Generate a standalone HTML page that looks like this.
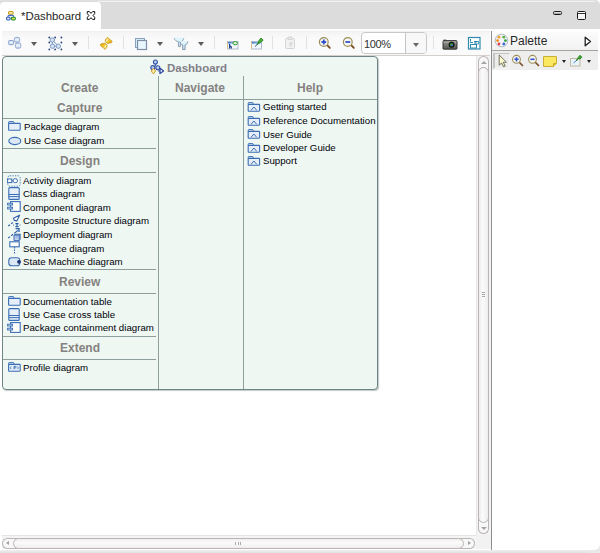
<!DOCTYPE html>
<html><head><meta charset="utf-8">
<style>
*{margin:0;padding:0;box-sizing:border-box}
html,body{width:600px;height:553px;overflow:hidden;background:#fff;font-family:"Liberation Sans",sans-serif}
.abs,svg{position:absolute}
#tabbar{left:0;top:0;width:600px;height:29px;background:#dcdcdc;border-top:1px solid #e0e0e0;border-radius:0 5px 0 0}
#tabline{left:98px;top:1px;width:497px;height:1px;background:#f2f2f2}
#tab{left:0;top:2px;width:101px;height:27px;background:#fff;border-radius:4px 4px 0 0}
#toolbar{left:2px;top:31px;width:488px;height:24px;background:linear-gradient(#f4f4f4,#fafafa 30%,#fafafa);border-top:1px solid #f0f0f0}
#tbline{left:2px;top:55px;width:488px;height:1px;background:#d6d0cc}
#dash{left:2px;top:56px;width:376px;height:334px;background:#eef7f2;border:1px solid #6f8585;border-radius:4px;box-shadow:1px 1px 1px #c4c8c8}
.hdr{position:absolute;font-weight:bold;color:#85817f;font-size:12px;white-space:nowrap;line-height:14px}
.it{position:absolute;font-size:9.7px;color:#000008;white-space:nowrap;line-height:11px}
.ln{position:absolute;height:1px;background:#8d9e9c}
.vl{position:absolute;width:1px;background:#8d9e9c}
.sep{position:absolute;top:36px;width:1px;height:13px;background:#e2e2e2}
.dd{position:absolute;top:42px;width:0;height:0;border-left:3px solid transparent;border-right:3px solid transparent;border-top:4px solid #5c5c5c}
#palette{left:491px;top:31px;width:109px;height:519px;background:#fff;border-left:1px solid #8e8e8e;border-radius:0 0 6px 0}
</style></head><body>
<div id="tabbar" class="abs"></div>
<div id="tabline" class="abs"></div>
<div id="tab" class="abs"></div>
<!-- tab icon -->
<svg style="left:5px;top:10px" width="12" height="12" viewBox="0 0 12 12">
 <rect x="3.5" y="1.5" width="4.6" height="2.8" rx="1" fill="#fff2a8" stroke="#c8981c" stroke-width="1.1"/>
 <path d="M5.8 4.3V5.6M3 7.2V5.6H8.6V7.2" fill="none" stroke="#3a5fc0" stroke-width="1"/>
 <rect x="1.5" y="7.3" width="3.6" height="2.7" rx="0.9" fill="#d8e6fa" stroke="#3a5fc0" stroke-width="1.1"/>
 <rect x="6.5" y="7.3" width="3.8" height="2.7" rx="0.9" fill="#e8ea50" stroke="#1f8a2a" stroke-width="1.1"/>
</svg>
<div class="abs" style="left:21px;top:10px;font-size:11.4px;line-height:13px;color:#262626">*Dashboard</div>
<svg style="left:86px;top:10px" width="10" height="11" viewBox="0 0 10 11">
 <path d="M1.3 1.6H3.4L5 3.3L6.6 1.6H8.7V3.6L7.1 5.5L8.7 7.4V9.4H6.6L5 7.7L3.4 9.4H1.3V7.4L2.9 5.5L1.3 3.6Z" fill="#fff" stroke="#0a0a0a" stroke-width="1" stroke-linejoin="round"/>
</svg>
<!-- window controls -->
<div class="abs" style="left:553px;top:11px;width:9px;height:4px;border:1.3px solid #1a1a1a;border-radius:1.5px;background:linear-gradient(#fafafa,#8a8a8a)"></div>
<div class="abs" style="left:577px;top:11px;width:9px;height:9px;border:1.3px solid #1a1a1a;border-radius:1.5px;background:linear-gradient(#fff,#f0f0f0)"></div><div class="abs" style="left:578px;top:13px;width:7px;height:1px;background:#333"></div>

<div id="toolbar" class="abs"></div>
<div id="tbline" class="abs"></div>
<!-- toolbar icons -->
<svg style="left:7px;top:36px" width="15" height="14" viewBox="0 0 15 14">
 <defs><linearGradient id="nb" x1="0" y1="0" x2="0" y2="1"><stop offset="0" stop-color="#c8d8ee"/><stop offset="0.5" stop-color="#eef4fb"/><stop offset="1" stop-color="#c0d0ea"/></linearGradient></defs>
 <rect x="1.6" y="4.5" width="5" height="4.2" rx="1.2" fill="url(#nb)" stroke="#7896c8" stroke-width="0.9"/>
 <rect x="7.3" y="1.4" width="5.4" height="4.8" rx="1.6" fill="url(#nb)" stroke="#8aa4cc" stroke-width="0.9"/>
 <rect x="8.4" y="7" width="5.4" height="5.2" rx="1.6" fill="url(#nb)" stroke="#8aa4cc" stroke-width="0.9"/>
</svg>
<div class="dd" style="left:31px"></div>
<svg style="left:47px;top:36px" width="16" height="15" viewBox="0 0 16 15">
 <g fill="#24407a"><circle cx="2.3" cy="1.5" r="0.9"/><circle cx="8.1" cy="1.5" r="0.9"/><circle cx="14.4" cy="1.5" r="0.9"/>
 <circle cx="2.3" cy="6.5" r="0.9"/><circle cx="14.4" cy="6.5" r="0.9"/>
 <circle cx="2.3" cy="13.4" r="0.9"/><circle cx="8.1" cy="13.4" r="0.9"/><circle cx="14.4" cy="13.4" r="0.9"/></g>
 <path d="M5.3 4L5.5 10M5.5 10.2L11.3 10.2M5.3 4L11.3 10" stroke="#6f8fc4" stroke-width="1"/>
 <circle cx="5.3" cy="4" r="2.2" fill="#d4e2f2" stroke="#7f9cc8"/>
 <circle cx="5.5" cy="10.2" r="2.2" fill="#d4e2f2" stroke="#7f9cc8"/>
 <circle cx="11.3" cy="10.2" r="2.2" fill="#d4e2f2" stroke="#7f9cc8"/>
</svg>
<div class="dd" style="left:72px"></div>
<div class="sep" style="left:88px"></div>
<svg style="left:98px;top:35px" width="16" height="16" viewBox="0 0 16 16">
 <defs><linearGradient id="gy" x1="0" y1="0" x2="1" y2="1"><stop offset="0" stop-color="#fff0a0"/><stop offset="0.6" stop-color="#f2c42a"/><stop offset="1" stop-color="#d89a10"/></linearGradient></defs>
 <g id="sy"><path d="M9.5 2.2L11 3.9L12.7 4.9L14 6.4L13.5 7.7L11.6 8L9.8 8.5L8.5 7.7L7.2 5.9L7.6 4.2Z" fill="url(#gy)" stroke="#c99418" stroke-width="0.8" stroke-linejoin="round"/>
 <path d="M8.6 6.6Q8.6 4.6 10 4.6" fill="none" stroke="#fff6c8" stroke-width="0.9"/></g>
 <use href="#sy" transform="rotate(180 8.2 8.3)"/>
</svg>
<div class="sep" style="left:123px"></div>
<svg style="left:134px;top:37px" width="14" height="14" viewBox="0 0 14 14">
 <rect x="1.5" y="1.5" width="9" height="9" fill="#dcf2fc" stroke="#8aa0bc" stroke-width="1"/>
 <rect x="3.5" y="3.5" width="9" height="9" fill="#e8f6fd" stroke="#7f8fa8" stroke-width="1.2"/>
</svg>
<div class="dd" style="left:157px"></div>
<svg style="left:172px;top:35px" width="18" height="17" viewBox="0 0 18 17">
 <defs><linearGradient id="fl" x1="0" y1="0" x2="0" y2="1"><stop offset="0" stop-color="#e6f8fe"/><stop offset="1" stop-color="#bfe6f6"/></linearGradient></defs>
 <path d="M2.2 3.1H11.8C11.6 5.3 9.8 6.6 8.4 6.8V11.6H6.4V6.8C5 6.6 2.4 5.3 2.2 3.1Z" fill="url(#fl)"/>
 <path d="M2.2 3.1C2.4 5.3 5 6.6 6.4 6.8V11.6H8.4V6.8C9.8 6.6 11.6 5.3 11.8 3.1" fill="none" stroke="#8898ac" stroke-width="0.9" stroke-linejoin="round"/>
 <path d="M7.9 6.6H15.8C15.6 8.6 14.2 9.7 13.1 9.9V14.6H10.7V9.9C9.6 9.7 8.1 8.6 7.9 6.6Z" fill="url(#fl)"/>
 <path d="M7.9 6.6C8.1 8.6 9.6 9.7 10.7 9.9V14.6H13.1V9.9C14.2 9.7 15.6 8.6 15.8 6.6" fill="none" stroke="#7a8aa0" stroke-width="0.9" stroke-linejoin="round"/>
 <path d="M2.6 3.1H11.4M8.3 6.6H15.4" stroke="#d4f0fa" stroke-width="0.8"/>
</svg>
<div class="dd" style="left:198px"></div>
<div class="sep" style="left:214px"></div>
<svg style="left:226px;top:40px" width="13" height="10" viewBox="0 0 13 10">
 <defs><linearGradient id="tb" x1="0" x2="1"><stop offset="0" stop-color="#3a7ad0"/><stop offset="1" stop-color="#bcd8f4"/></linearGradient></defs>
 <rect x="1.5" y="1.5" width="10.5" height="7.5" fill="#f0f8fe" stroke="#a8b4c8" stroke-width="0.9"/>
 <path d="M1.5 1.5V9" stroke="#d8c080" stroke-width="0.9"/>
 <rect x="2" y="2" width="9.6" height="1.6" fill="url(#tb)"/>
 <path d="M3.6 4V8.6M3.6 6.2Q5.4 5.4 5.4 8.6" fill="none" stroke="#1a3a8a" stroke-width="1.2"/>
 <ellipse cx="9.2" cy="3.2" rx="2.3" ry="1.6" fill="#e8f8e0" stroke="#2a9a2a" stroke-width="1"/>
</svg>
<svg style="left:250px;top:37px" width="14" height="13" viewBox="0 0 14 13">
 <rect x="1.5" y="4.5" width="10" height="7.5" fill="#f0f8fe" stroke="#a8b4c8" stroke-width="0.9"/>
 <path d="M1.5 4.5V12" stroke="#d8c080" stroke-width="0.9"/>
 <rect x="2" y="5" width="9" height="1.6" fill="url(#tb)"/>
 <path d="M5 9.5L7.5 7.2" stroke="#1a3a8a" stroke-width="0.9"/>
 <path d="M7 7.5L9.5 5" stroke="#2a7a20" stroke-width="1.4"/>
 <path d="M8.2 4.6L11 1L13.2 3.2L9.8 6.2Z" fill="#48b038" stroke="#2a8020" stroke-width="0.8" stroke-linejoin="round"/>
</svg>
<div class="sep" style="left:272px"></div>
<svg style="left:284px;top:36px" width="13" height="14" viewBox="0 0 13 14">
 <rect x="1.5" y="2.5" width="9" height="10" rx="1" fill="#f2f2f2" stroke="#d4d4d4"/>
 <rect x="4" y="1" width="4" height="2.5" fill="#e8e8e8" stroke="#d0d0d0" stroke-width="0.8"/>
 <path d="M5 7H9M5 9H7M7 7V11" stroke="#d0d0d0" stroke-width="1"/>
</svg>
<div class="sep" style="left:306px"></div>
<svg style="left:317px;top:36px" width="15" height="14" viewBox="0 0 15 14">
 <path d="M9.5 8.5L12.8 11.8" stroke="#7a4a22" stroke-width="1.8" stroke-linecap="round"/>
 <circle cx="6.8" cy="6" r="4.4" fill="#f8f8f2" stroke="#9a8f5a" stroke-width="1.2"/>
 <path d="M4.4 6H9.2M6.8 3.6V8.4" stroke="#3450c8" stroke-width="1.8"/>
</svg>
<svg style="left:341px;top:36px" width="15" height="14" viewBox="0 0 15 14">
 <path d="M9.5 8.5L12.8 11.8" stroke="#7a4a22" stroke-width="1.8" stroke-linecap="round"/>
 <circle cx="6.8" cy="6" r="4.4" fill="#f8f8f2" stroke="#9a8f5a" stroke-width="1.2"/>
 <path d="M4.4 6H9.2" stroke="#3450c8" stroke-width="1.8"/>
</svg>
<!-- zoom combo -->
<div class="abs" style="left:361px;top:32px;width:66px;height:22px;border:1px solid #c8c8c8;border-radius:4px;background:#fff"></div>
<div class="abs" style="left:405px;top:33px;width:1px;height:20px;background:#c4c4c4"></div>
<div class="abs" style="left:406px;top:33px;width:20px;height:20px;background:#f8f8f8;border-radius:0 3px 3px 0"></div>
<div class="dd" style="left:413px;top:43px;border-top-color:#6a6a6a"></div>
<div class="abs" style="left:364px;top:38px;font-size:11px;line-height:12px;letter-spacing:-0.4px;color:#303030">100%</div>
<div class="sep" style="left:433px"></div>
<svg style="left:442px;top:38px" width="16" height="12" viewBox="0 0 16 12">
 <defs><linearGradient id="cam" x1="0" y1="0" x2="0" y2="1"><stop offset="0" stop-color="#9a9a96"/><stop offset="1" stop-color="#555552"/></linearGradient></defs>
 <rect x="1.5" y="1.6" width="2.8" height="1.4" fill="#444"/>
 <rect x="1" y="2.6" width="14" height="8.6" rx="0.8" fill="url(#cam)" stroke="#2a2a2a" stroke-width="0.9"/>
 <path d="M1.5 4.2H14.5" stroke="#bdbdb8" stroke-width="0.7"/>
 <circle cx="9.6" cy="6.8" r="3" fill="#111"/><circle cx="9.6" cy="6.8" r="1.8" fill="#2a9a3a"/><circle cx="10.1" cy="7.3" r="0.9" fill="#5a4ae8"/>
</svg>
<svg style="left:467px;top:36px" width="14" height="14" viewBox="0 0 14 14">
 <rect x="1.5" y="1.5" width="11.5" height="11.5" fill="#fff" stroke="#2e8ab0" stroke-width="1.2"/>
 <path d="M3.5 3V5.5M3 6.5H6M7 5.5H11M8 5.5V8" stroke="#2e8ab0" stroke-width="1"/>
 <rect x="9" y="5.5" width="2.5" height="2.5" fill="none" stroke="#2e8ab0" stroke-width="0.8"/>
 <rect x="3.5" y="8.5" width="6" height="3.5" fill="#fff" stroke="#2e8ab0" stroke-width="1"/>
</svg>

<div id="dash" class="abs"></div>
<svg style="left:148px;top:58px" width="18" height="18" viewBox="0 0 18 18">
 <path d="M7.4 6V8M4.8 9.5L7.4 7.6L9.8 9.5M10 13H12.5" fill="none" stroke="#3a58a8" stroke-width="1"/>
 <path d="M12 10.2L15.6 12.9L12 15.6Z" fill="#fff" stroke="#3452a6" stroke-width="1.3" stroke-linejoin="round"/>
 <circle cx="7.4" cy="4" r="2" fill="#b8cde8" stroke="#3452a6" stroke-width="1.1"/>
 <circle cx="4.8" cy="9.6" r="2" fill="#b8cde8" stroke="#3452a6" stroke-width="1.1"/>
 <circle cx="9.8" cy="9.8" r="2" fill="#b8cde8" stroke="#3452a6" stroke-width="1.1"/>
 <path d="M5.4 10.3L7.6 13L5.4 16L3.2 13Z" fill="#f6e08a" stroke="#c89a28" stroke-width="0.9" stroke-linejoin="round"/>
 <path d="M5.4 11.6V14.6" stroke="#fff8d0" stroke-width="0.8"/>
</svg>
<div class="hdr" style="left:167px;top:61px;font-size:11.5px;color:#827f88">Dashboard</div>
<div class="hdr" style="left:61px;top:81px">Create</div>
<div class="hdr" style="left:175px;top:81px">Navigate</div>
<div class="hdr" style="left:297px;top:81px">Help</div>
<div class="hdr" style="left:57px;top:101px">Capture</div>
<div class="hdr" style="left:60px;top:154px">Design</div>
<div class="hdr" style="left:59px;top:275px">Review</div>
<div class="hdr" style="left:60px;top:341px">Extend</div>
<div class="vl" style="left:158px;top:76px;height:313px"></div>
<div class="vl" style="left:243px;top:76px;height:313px"></div>
<div class="ln" style="left:158px;top:99px;width:219px"></div>
<div class="ln" style="left:3px;top:118px;width:153px"></div>
<div class="ln" style="left:3px;top:148px;width:153px"></div>
<div class="ln" style="left:3px;top:172px;width:153px"></div>
<div class="ln" style="left:3px;top:269px;width:153px"></div>
<div class="ln" style="left:3px;top:293px;width:153px"></div>
<div class="ln" style="left:3px;top:336px;width:153px"></div>
<div class="ln" style="left:3px;top:359px;width:153px"></div>
<svg style="left:8px;top:121px" width="14" height="10" viewBox="0 0 14 10"><path d="M0.6 2.2V1.2Q0.6 0.6 1.2 0.6H5.2Q5.8 0.6 5.8 1.2V2.2" fill="#e6eff9" stroke="#3b6db4" stroke-width="1"/><rect x="0.6" y="2.4" width="11.6" height="6.8" rx="0.6" fill="#e6eff9" stroke="#3b6db4" stroke-width="1.1"/></svg>
<svg style="left:8px;top:136px" width="14" height="10" viewBox="0 0 14 10"><ellipse cx="6.8" cy="5" rx="6" ry="3.6" fill="#dde8f6" stroke="#3b6db4" stroke-width="1.1"/></svg>
<svg style="left:7px;top:175px" width="14" height="12" viewBox="0 0 14 12"><rect x="0.8" y="0.8" width="12.4" height="10.4" rx="2" fill="none" stroke="#3b6db4" stroke-width="0.9" stroke-dasharray="1.3 1.3"/><rect x="0.6" y="4" width="4.2" height="3.6" fill="#fff" stroke="#3b6db4" stroke-width="1"/><rect x="6.2" y="3.8" width="4.2" height="3.8" rx="1.5" fill="#fff" stroke="#3b6db4" stroke-width="1"/><path d="M4.8 5.8H6.2" stroke="#3b6db4"/></svg>
<svg style="left:8px;top:187px" width="12" height="13" viewBox="0 0 12 13"><rect x="0.8" y="0.6" width="10.4" height="11.8" rx="1" fill="#e6eff9" stroke="#3b6db4" stroke-width="1.1"/><path d="M0.8 7.5H11.2M0.8 9.6H11.2" stroke="#3b6db4" stroke-width="1"/></svg>
<svg style="left:7px;top:201px" width="14" height="11" viewBox="0 0 14 11"><rect x="3.6" y="0.6" width="9.6" height="9.8" fill="#fff" stroke="#3b6db4" stroke-width="1.1"/><rect x="0.6" y="2.2" width="5" height="1.8" fill="#cfe0f4" stroke="#3b6db4" stroke-width="0.9"/><rect x="0.6" y="6.2" width="5" height="1.8" fill="#cfe0f4" stroke="#3b6db4" stroke-width="0.9"/></svg>
<svg style="left:6px;top:213px" width="16" height="16" viewBox="0 0 16 16">
 <path d="M2.2 13L4 11.7M5.2 10.8L6.8 9.6" stroke="#2f5fa8" stroke-width="1.2"/>
 <path d="M13.6 2.2L7.4 5.3L8.4 7.4L10.8 7.9Z" fill="#fff" stroke="#2f5fa8" stroke-width="1.1" stroke-linejoin="round"/>
 <path d="M9.4 10.6H12.6M11 10.6V13.6M9.4 13.6H12.6" stroke="#2f5fa8" stroke-width="1.1"/>
 <path d="M7.6 11.4V12.8M14 11.4V12.8" stroke="#6a90c8" stroke-width="0.9"/>
</svg>
<svg style="left:6px;top:227px" width="16" height="15" viewBox="0 0 16 15">
 <path d="M2.2 11L4 9.6M5.2 8.7L7 7.3M8.2 6.4L12 3.4" stroke="#2f5fa8" stroke-width="1.2"/>
 <path d="M9.6 1.6H13V5" fill="none" stroke="#2f5fa8" stroke-width="1.3"/>
 <path d="M8 8.2L9 7.2H14.2V12.6L13.2 13.6H8Z" fill="#c6d8ee" stroke="#2f5fa8" stroke-width="0.9"/>
 <path d="M8 8.2H13.2V13.6M13.2 8.2L14.2 7.2" fill="none" stroke="#2f5fa8" stroke-width="0.8"/>
 <path d="M9.3 9.5H12M9.3 11H12" stroke="#7a9ad0" stroke-width="0.6"/>
</svg>
<svg style="left:9px;top:241px" width="11" height="14" viewBox="0 0 11 14"><rect x="0.8" y="0.8" width="9.4" height="5" fill="#fff" stroke="#3b6db4" stroke-width="1.1"/><path d="M5.5 6V13.5" stroke="#3b6db4" stroke-width="1.1" stroke-dasharray="1.4 1.1"/></svg>
<svg style="left:8px;top:257px" width="13" height="10" viewBox="0 0 13 10"><rect x="0.8" y="0.8" width="11" height="8" rx="2.8" fill="#dde8f6" stroke="#3b6db4" stroke-width="1.1"/><circle cx="11" cy="4.8" r="1.9" fill="#1c3270"/></svg>
<svg style="left:8px;top:296px" width="14" height="10" viewBox="0 0 14 10"><path d="M0.6 2.2V1.2Q0.6 0.6 1.2 0.6H5.2Q5.8 0.6 5.8 1.2V2.2" fill="#e6eff9" stroke="#3b6db4" stroke-width="1"/><rect x="0.6" y="2.4" width="11.6" height="6.8" rx="0.6" fill="#e6eff9" stroke="#3b6db4" stroke-width="1.1"/></svg>
<svg style="left:8px;top:308px" width="12" height="13" viewBox="0 0 12 13"><rect x="0.8" y="0.6" width="10.4" height="11.8" rx="1" fill="#e6eff9" stroke="#3b6db4" stroke-width="1.1"/><path d="M0.8 7.5H11.2M0.8 9.6H11.2" stroke="#3b6db4" stroke-width="1"/></svg>
<svg style="left:7px;top:322px" width="14" height="11" viewBox="0 0 14 11"><rect x="3.6" y="0.6" width="9.6" height="9.8" fill="#fff" stroke="#3b6db4" stroke-width="1.1"/><rect x="0.6" y="2.2" width="5" height="1.8" fill="#cfe0f4" stroke="#3b6db4" stroke-width="0.9"/><rect x="0.6" y="6.2" width="5" height="1.8" fill="#cfe0f4" stroke="#3b6db4" stroke-width="0.9"/></svg>
<svg style="left:8px;top:362px" width="14" height="10" viewBox="0 0 14 10"><path d="M0.6 2.2V1.2Q0.6 0.6 1.2 0.6H5.2Q5.8 0.6 5.8 1.2V2.2" fill="#e6eff9" stroke="#3b6db4" stroke-width="1"/><rect x="0.6" y="2.4" width="11.6" height="6.8" rx="0.6" fill="#e6eff9" stroke="#3b6db4" stroke-width="1.1"/><path d="M3.2 4.4L2.2 5.8L3.2 7.2M9.4 4.4L10.4 5.8L9.4 7.2" fill="none" stroke="#3b6db4" stroke-width="0.8"/><path d="M6 7.4V4.3H7.3Q8.1 4.3 8.1 5.1Q8.1 5.9 7.3 5.9H6" fill="none" stroke="#3b6db4" stroke-width="0.9"/></svg>
<svg style="left:247px;top:102px" width="14" height="10" viewBox="0 0 14 10"><path d="M1.2 2.2V1.2Q1.2 0.6 1.8 0.6H5.6Q6.2 0.6 6.2 1.2V2.2" fill="#e6eff9" stroke="#3b6db4" stroke-width="1"/><rect x="1.2" y="2.4" width="11.4" height="6.8" rx="0.6" fill="#e6eff9" stroke="#3b6db4" stroke-width="1.1"/><path d="M4 8.4L6.9 5L9.8 8.4" fill="none" stroke="#3b6db4" stroke-width="1"/></svg>
<svg style="left:247px;top:116px" width="14" height="10" viewBox="0 0 14 10"><path d="M1.2 2.2V1.2Q1.2 0.6 1.8 0.6H5.6Q6.2 0.6 6.2 1.2V2.2" fill="#e6eff9" stroke="#3b6db4" stroke-width="1"/><rect x="1.2" y="2.4" width="11.4" height="6.8" rx="0.6" fill="#e6eff9" stroke="#3b6db4" stroke-width="1.1"/><path d="M4 8.4L6.9 5L9.8 8.4" fill="none" stroke="#3b6db4" stroke-width="1"/></svg>
<svg style="left:247px;top:129px" width="14" height="10" viewBox="0 0 14 10"><path d="M1.2 2.2V1.2Q1.2 0.6 1.8 0.6H5.6Q6.2 0.6 6.2 1.2V2.2" fill="#e6eff9" stroke="#3b6db4" stroke-width="1"/><rect x="1.2" y="2.4" width="11.4" height="6.8" rx="0.6" fill="#e6eff9" stroke="#3b6db4" stroke-width="1.1"/><path d="M4 8.4L6.9 5L9.8 8.4" fill="none" stroke="#3b6db4" stroke-width="1"/></svg>
<svg style="left:247px;top:143px" width="14" height="10" viewBox="0 0 14 10"><path d="M1.2 2.2V1.2Q1.2 0.6 1.8 0.6H5.6Q6.2 0.6 6.2 1.2V2.2" fill="#e6eff9" stroke="#3b6db4" stroke-width="1"/><rect x="1.2" y="2.4" width="11.4" height="6.8" rx="0.6" fill="#e6eff9" stroke="#3b6db4" stroke-width="1.1"/><path d="M4 8.4L6.9 5L9.8 8.4" fill="none" stroke="#3b6db4" stroke-width="1"/></svg>
<svg style="left:247px;top:156px" width="14" height="10" viewBox="0 0 14 10"><path d="M1.2 2.2V1.2Q1.2 0.6 1.8 0.6H5.6Q6.2 0.6 6.2 1.2V2.2" fill="#e6eff9" stroke="#3b6db4" stroke-width="1"/><rect x="1.2" y="2.4" width="11.4" height="6.8" rx="0.6" fill="#e6eff9" stroke="#3b6db4" stroke-width="1.1"/><path d="M4 8.4L6.9 5L9.8 8.4" fill="none" stroke="#3b6db4" stroke-width="1"/></svg>
<div class="it" style="left:24px;top:121px">Package diagram</div>
<div class="it" style="left:24px;top:135px">Use Case diagram</div>
<div class="it" style="left:23px;top:175px">Activity diagram</div>
<div class="it" style="left:23px;top:188px">Class diagram</div>
<div class="it" style="left:23px;top:202px">Component diagram</div>
<div class="it" style="left:23px;top:215px">Composite Structure diagram</div>
<div class="it" style="left:23px;top:229px">Deployment diagram</div>
<div class="it" style="left:23px;top:243px">Sequence diagram</div>
<div class="it" style="left:23px;top:256px">State Machine diagram</div>
<div class="it" style="left:23px;top:296px">Documentation table</div>
<div class="it" style="left:23px;top:309px">Use Case cross table</div>
<div class="it" style="left:23px;top:322px">Package containment diagram</div>
<div class="it" style="left:23px;top:362px">Profile diagram</div>
<div class="it" style="left:263px;top:101px">Getting started</div>
<div class="it" style="left:263px;top:115px">Reference Documentation</div>
<div class="it" style="left:263px;top:129px">User Guide</div>
<div class="it" style="left:263px;top:142px">Developer Guide</div>
<div class="it" style="left:263px;top:155px">Support</div>

<!-- scrollbars -->
<div class="abs" style="left:476px;top:56px;width:15px;height:479px;background:#f4f4f4;border-left:1px solid #e8e8e8"></div>
<div class="abs" style="left:2px;top:535px;width:474px;height:14px;background:#f4f4f4;border-top:1px solid #e4e4e4"></div>
<div class="abs" style="left:476px;top:535px;width:15px;height:14px;background:#f2f2f2"></div>
<div class="abs" style="left:478px;top:56px;width:11px;height:16px;border:1px solid #bab4b2;border-bottom:none;border-radius:5.5px 5.5px 0 0;background:#f8f8f8"></div>
<div class="abs" style="left:481px;top:61px;width:0;height:0;border-left:3px solid transparent;border-right:3px solid transparent;border-bottom:3px solid #a4a4a4"></div>
<div class="abs" style="left:478px;top:67px;width:11px;height:456px;border:1px solid #bab4b2;border-radius:5.5px;background:linear-gradient(90deg,#f0eeee,#fbfbfb 40%,#f0eeee)"></div>
<div class="abs" style="left:478px;top:518px;width:11px;height:16px;border:1px solid #bab4b2;border-top:none;border-radius:0 0 5.5px 5.5px;background:#f8f8f8;z-index:0"></div>
<div class="abs" style="left:478px;top:67px;width:11px;height:456px;border:1px solid #bab4b2;border-radius:5.5px;background:linear-gradient(90deg,#eeecec,#fbfbfb 40%,#efeded)"></div>
<div class="abs" style="left:481px;top:527px;width:0;height:0;border-left:3px solid transparent;border-right:3px solid transparent;border-top:3px solid #a4a4a4"></div>
<div class="abs" style="left:482px;top:292px;width:3px;height:1px;background:#aaa;box-shadow:0 2px 0 #aaa,0 4px 0 #aaa"></div>
<div class="abs" style="left:2px;top:538px;width:16px;height:11px;border:1px solid #bab4b2;border-right:none;border-radius:5.5px 0 0 5.5px;background:#f8f8f8"></div>
<div class="abs" style="left:6px;top:541px;width:0;height:0;border-top:2.5px solid transparent;border-bottom:2.5px solid transparent;border-right:3px solid #a0a0a0"></div>
<div class="abs" style="left:459px;top:538px;width:16px;height:11px;border:1px solid #bab4b2;border-left:none;border-radius:0 5.5px 5.5px 0;background:#f8f8f8"></div>
<div class="abs" style="left:13px;top:538px;width:451px;height:11px;border:1px solid #bab4b2;border-radius:5.5px;background:linear-gradient(#f0eeee,#fbfbfb 40%,#efeded)"></div>
<div class="abs" style="left:468px;top:541px;width:0;height:0;border-top:2.5px solid transparent;border-bottom:2.5px solid transparent;border-left:3px solid #a0a0a0"></div>
<div class="abs" style="left:235px;top:542px;width:1px;height:3px;background:#aaa;box-shadow:3px 0 0 #aaa,5px 0 0 #aaa"></div>
<div class="abs" style="left:0;top:550px;width:600px;height:3px;background:linear-gradient(#eeeeee,#e2e2e2)"></div><div class="abs" style="left:588px;top:540px;width:12px;height:13px;background:#e8e8e8"></div>

<div id="palette" class="abs"></div>
<div class="abs" style="left:492px;top:31px;width:106px;height:19px;background:linear-gradient(#fcfcfc,#f2f2f2)"></div>
<div class="abs" style="left:492px;top:50px;width:106px;height:1px;background:#a8a29c"></div>
<div class="abs" style="left:492px;top:51px;width:106px;height:19px;background:#eeeeee"></div>

<svg style="left:494px;top:33px" width="15" height="15" viewBox="0 0 15 15">
 <circle cx="7.5" cy="7.5" r="6.3" fill="#f4f4f8" stroke="#b4b8c4" stroke-width="1"/>
 <circle cx="5" cy="4.2" r="1.4" fill="#f0a020"/><circle cx="9.8" cy="4.2" r="1.4" fill="#5ab040"/>
 <circle cx="3.6" cy="7.6" r="1.4" fill="#f08a10"/><circle cx="11.4" cy="7.6" r="1.4" fill="#30a040"/>
 <circle cx="5" cy="11" r="1.4" fill="#e04050"/><circle cx="9.8" cy="11" r="1.4" fill="#3a6ad0"/>
</svg>
<div class="abs" style="left:510px;top:34px;font-size:12px;line-height:14px;color:#2a2a2a">Palette</div>
<svg style="left:584px;top:36px" width="8" height="11" viewBox="0 0 8 11">
 <path d="M1.2 1.2L6.5 5.5L1.2 9.8Z" fill="#fff" stroke="#222" stroke-width="1.3" stroke-linejoin="round"/>
</svg>
<div class="abs" style="left:493px;top:53px;width:17px;height:16px;background:#ececec;border:1px solid #c4c4c4;border-width:1px 1px 1px 2px;border-right-color:#f6f6f6;border-bottom-color:#f6f6f6"></div>
<svg style="left:498px;top:54px" width="10" height="14" viewBox="0 0 10 14">
 <path d="M1.2 1L1.2 11.2L3.6 9L5.6 12.8L7.2 12L5.2 8.3L8.4 8.2Z" fill="#fdfbd0" stroke="#4a4a3a" stroke-width="0.75" stroke-linejoin="round"/>
</svg>
<svg style="left:511px;top:54px" width="13" height="13" viewBox="0 0 13 13">
 <path d="M8 8L11.5 11.5" stroke="#7a4a22" stroke-width="1.6" stroke-linecap="round"/>
 <circle cx="5.5" cy="5.3" r="3.9" fill="#f8f8f2" stroke="#9a8f5a" stroke-width="1.1"/>
 <path d="M3.4 5.3H7.6M5.5 3.2V7.4" stroke="#3450c8" stroke-width="1.6"/>
</svg>
<svg style="left:527px;top:54px" width="13" height="13" viewBox="0 0 13 13">
 <path d="M8 8L11.5 11.5" stroke="#7a4a22" stroke-width="1.6" stroke-linecap="round"/>
 <circle cx="5.5" cy="5.3" r="3.9" fill="#f8f8f2" stroke="#9a8f5a" stroke-width="1.1"/>
 <path d="M3.4 5.3H7.6" stroke="#3450c8" stroke-width="1.6"/>
</svg>
<svg style="left:543px;top:56px" width="14" height="11" viewBox="0 0 14 11">
 <path d="M0.5 0.5H13.5V7.5L10.5 10.5H0.5Z" fill="#fae860" stroke="#c8b038" stroke-width="1"/>
 <path d="M13.5 7.5H10.5V10.5" fill="#e8c830" stroke="#c8a028" stroke-width="0.8"/>
</svg>
<div class="dd" style="left:562px;top:60px;border-left-width:2px;border-right-width:2px;border-top:3px solid #222"></div>
<svg style="left:569px;top:54px" width="14" height="13" viewBox="0 0 14 13">
 <rect x="1.5" y="4.5" width="9.5" height="7.5" fill="#e8f4fc" stroke="#c0b8a0" stroke-width="1"/>
 <path d="M4.5 9L8 6" stroke="#4a78c0" stroke-width="0.9"/>
 <path d="M7.2 6.6L9.8 4" stroke="#2a7a20" stroke-width="1.3"/>
 <path d="M9 3.6L11 1.2L13 3.2L10.6 5.2Z" fill="#3ea030" stroke="#2a8a20" stroke-width="0.8"/>
</svg>
<div class="dd" style="left:587px;top:60px;border-left-width:2px;border-right-width:2px;border-top:3px solid #222"></div>
</body></html>
